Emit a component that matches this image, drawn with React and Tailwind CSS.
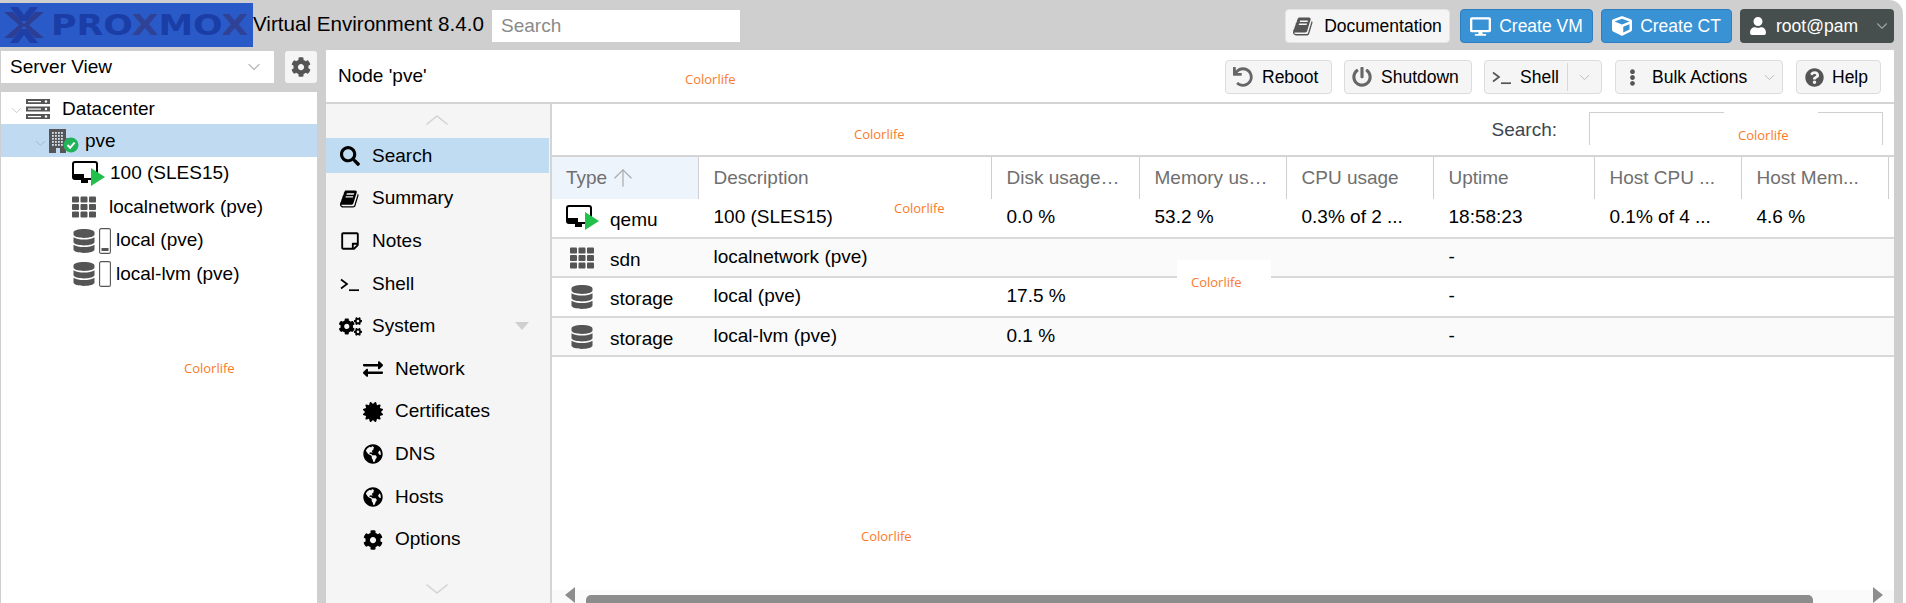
import React from 'react';
import { ChevronDown, ChevronUp, ArrowUp } from 'lucide-react';
import {
  FaDesktop, FaCube, FaUser, FaSearch, FaCog, FaCogs, FaExchangeAlt,
  FaCertificate, FaGlobeAmericas, FaDatabase, FaTh, FaUndo, FaPowerOff,
  FaEllipsisV, FaQuestionCircle, FaRegStickyNote,
} from 'react-icons/fa';

const Book = ({ className }) => (
  <svg viewBox="0 0 1792 1792" className={className} fill="currentColor">
    <path d="M1639 478q40 57 18 129l-275 906q-19 64-76.5 107.5t-122.5 43.5h-923q-77 0-148.5-53.5t-99.5-131.5q-24-67-2-127 0-4 3-27t4-37q1-8-3-21.5t-3-19.5q2-11 8-21t16.5-23.5 16.5-23.5q23-38 45-91.5t30-91.5q3-10 .5-30t-.5-28q3-11 17-28t17-23q21-36 42-92t25-90q1-9-2.5-32t.5-28q4-13 22-30.5t22-22.5q19-26 42.5-84.5t27.5-96.5q1-8-3-25.5t-2-26.5q2-8 9-18t18-23 17-21q8-12 16.5-30.5t15-35 16-36 19.5-32 26.5-23.5 36-11.5 47.5 5.5l-1 3q38-9 51-9h761q74 0 114 56t18 130l-274 906q-36 119-71.5 153.5t-128.5 34.5h-869q-27 0-38 15-11 16-1 43 24 70 144 70h923q29 0 56-15.5t35-41.5l300-987q7-22 5-57 38 15 59 43zm-1064 2q-4 13 2 22.5t20 9.5h608q13 0 25.5-9.5t16.5-22.5l21-64q4-13-2-22.5t-20-9.5h-608q-13 0-25.5 9.5t-16.5 22.5zm-83 256q-4 13 2 22.5t20 9.5h608q13 0 25.5-9.5t16.5-22.5l21-64q4-13-2-22.5t-20-9.5h-608q-13 0-25.5 9.5t-16.5 22.5z" />
  </svg>
);

const Shell = ({ className }) => (
  <svg viewBox="0 0 20 16" className={className} fill="none" stroke="currentColor" strokeWidth="1.7">
    <path d="M1 3.5 7 8l-6 4.5" />
    <path d="M9 14.2h10" />
  </svg>
);

const VmIcon = () => (
  <svg width="34" height="26" viewBox="0 0 34 26">
    <rect x="1" y="1" width="24" height="17" rx="2" fill="#fff" stroke="#000" strokeWidth="2" />
    <path d="M1 13h11v5H16v4H9v-4H3a2 2 0 0 1-2-2z" fill="#000" />
    <path d="M19 7v18l14-9z" fill="#21bf4b" />
  </svg>
);

const Datacenter = () => (
  <svg width="24" height="20" viewBox="0 0 24 20">
    <rect y="0" width="24" height="5" fill="#555" />
    <rect y="7.5" width="24" height="5" fill="#555" />
    <rect y="15" width="24" height="5" fill="#555" />
    <rect x="2" y="2" width="13" height="1.2" fill="#fff" />
    <rect x="2" y="9.5" width="13" height="1.2" fill="#fff" />
    <rect x="2" y="17" width="13" height="1.2" fill="#fff" />
    <circle cx="20" cy="2.5" r="1.2" fill="#fff" />
    <circle cx="20" cy="10" r="1.2" fill="#fff" />
    <circle cx="20" cy="17.5" r="1.2" fill="#fff" />
  </svg>
);

const NodeIcon = () => (
  <svg width="30" height="26" viewBox="0 0 30 26">
    <rect x="0" y="0" width="17" height="24" fill="#555" />
    <path d="M17 9h3v6h-3z" fill="#777" />
    {[3, 6, 9, 12].map((x) =>
      [3, 6, 9, 12, 15].map((y) => <rect key={`${x}-${y}`} x={x} y={y} width="1.8" height="1.8" fill="#d5e3ef" />)
    )}
    <rect x="7" y="19" width="4" height="5" fill="#c0dbf1" />
    <circle cx="22" cy="16" r="7.5" fill="#21b35a" />
    <path d="M18.5 16l2.6 2.7 4.5-5" fill="none" stroke="#fff" strokeWidth="2" />
  </svg>
);

const Device = ({ filled }) => (
  <svg width="12" height="26" viewBox="0 0 12 26">
    <rect x=".6" y=".6" width="10.8" height="24.8" rx="1.5" fill="#fff" stroke="#555" strokeWidth="1.1" />
    {filled && <rect x="2.5" y="20" width="7" height="3" fill="#555" />}
  </svg>
);

const Mark = ({ className }) => (
  <span className={`absolute font-['Open_Sans',sans-serif] text-[13px] leading-[18px] text-[#f97a2a] ${className}`}>
    Colorlife
  </span>
);

const Logo = () => (
  <div className="mt-[3px] flex h-[44px] w-[253px] shrink-0 items-center overflow-hidden bg-[#2a5ac8] pl-[3px]">
    <svg width="42" height="38" viewBox="0 0 42 38" className="shrink-0">
      <path d="M1 6h9l11 12 11-12h9L26 19l15 13h-9L21 20 10 32H1l15-13z" fill="#2d3f94" />
      <path d="M7 1h8l6 8 6-8h8L24 15h-6zM7 37h8l6-8 6 8h8L24 23h-6z" fill="#1f3fa6" />
    </svg>
    <span className="ml-[6px] origin-left scale-x-[1.2] font-['DejaVu_Sans',sans-serif] text-[29px] font-bold leading-none text-[#1a3da6]">
      PRO<span className="text-[#2f4296]">X</span>MO<span className="text-[#2f4296]">X</span>
    </span>
  </div>
);

const TopButton = ({ icon: Icon, label, className, iconClass }) => (
  <button className={`flex h-[34px] items-center justify-center gap-[8px] rounded-[4px] border text-[17.5px] ${className}`}>
    <Icon className={iconClass} />
    {label}
  </button>
);

const ToolButton = ({ icon: Icon, label, className, children, iconClass = 'text-[#666] text-[19px]' }) => (
  <button className={`flex h-[34px] items-center gap-[8px] rounded-[4px] border border-[#dcdcdc] bg-[#f5f5f5] pl-[7px] text-[17.5px] text-black ${className}`}>
    <Icon className={iconClass} />
    {label}
    {children}
  </button>
);

const menu = [
  { icon: FaSearch, label: 'Search', active: true },
  { icon: Book, label: 'Summary' },
  { icon: FaRegStickyNote, label: 'Notes' },
  { icon: Shell, label: 'Shell' },
  { icon: FaCogs, label: 'System', caret: true },
  { icon: FaExchangeAlt, label: 'Network', sub: true },
  { icon: FaCertificate, label: 'Certificates', sub: true },
  { icon: FaGlobeAmericas, label: 'DNS', sub: true },
  { icon: FaGlobeAmericas, label: 'Hosts', sub: true },
  { icon: FaCog, label: 'Options', sub: true },
];

const columns = ['Description', 'Disk usage…', 'Memory us…', 'CPU usage', 'Uptime', 'Host CPU ...', 'Host Mem...'];

const rows = [
  { icon: <VmIcon />, type: 'qemu', cells: ['100 (SLES15)', '0.0 %', '53.2 %', '0.3% of 2 ...', '18:58:23', '0.1% of 4 ...', '4.6 %'], h: 'h-[40px] bg-white' },
  { icon: <FaTh className="ml-[4px] text-[24px] text-[#555]" />, type: 'sdn', cells: ['localnetwork (pve)', '', '', '', '-', '', ''], h: 'h-[39px] bg-[#fafafa]' },
  { icon: <FaDatabase className="ml-[4px] text-[24px] text-[#555]" />, type: 'storage', cells: ['local (pve)', '17.5 %', '', '', '-', '', ''], h: 'h-[40px] bg-white' },
  { icon: <FaDatabase className="ml-[4px] text-[24px] text-[#555]" />, type: 'storage', cells: ['local-lvm (pve)', '0.1 %', '', '', '-', '', ''], h: 'h-[39px] bg-[#fafafa]' },
];

const gridCols = 'grid-cols-[147px_293px_148px_147px_147px_161px_147px_147px_5px]';

export default function App() {
  return (
    <div className="relative h-[603px] w-[1906px] overflow-hidden bg-white font-['Liberation_Sans',Arial,sans-serif] text-[19px] text-black">
      <div className="flex h-full w-[1903px] flex-col rounded-tr-[14px] bg-[#cfcfcf]">
        {/* top bar */}
        <header className="flex h-[50px] shrink-0 items-start">
          <Logo />
          <span className="mt-[10px] w-[239px] shrink-0 text-[20.6px] leading-[28px]">Virtual Environment 8.4.0</span>
          <input
            placeholder="Search"
            className="mt-[10px] h-[32px] w-[248px] bg-white px-[9px] text-[19px] outline-none placeholder:text-[#8a8a8a]"
          />
          <div className="ml-auto mr-[9px] mt-[9px] flex gap-[8px]">
            <TopButton icon={Book} label="Documentation" className="w-[165px] gap-[10px] border-[#e4e4e4] bg-[#f5f5f5]" iconClass="h-[21px] w-[21px] text-[#555]" />
            <TopButton icon={FaDesktop} label="Create VM" className="ml-[2px] w-[133px] border-[#2f7fc0] bg-[#3892d4] text-white" iconClass="text-[21px]" />
            <TopButton icon={FaCube} label="Create CT" className="w-[131px] border-[#2f7fc0] bg-[#3892d4] text-white" iconClass="text-[20px]" />
            <button className="flex h-[34px] w-[154px] items-center gap-[9px] rounded-[4px] bg-[#474f4e] pl-[9px] text-[17.5px] text-white">
              <FaUser className="text-[18px]" />
              root@pam
              <ChevronDown size={18} strokeWidth={1.5} className="ml-[6px] text-[#9aa3a2]" />
            </button>
          </div>
        </header>

        <div className="flex min-h-0 flex-1 gap-[9px]">
          {/* left tree */}
          <aside className="flex w-[317px] shrink-0 flex-col pl-[1px]">
            <div className="flex h-[33px] items-center justify-between pt-[1px]">
              <div className="flex h-[32px] w-[273px] items-center justify-between bg-white pl-[9px] pr-[10px]">
                Server View
                <ChevronDown size={20} strokeWidth={1.5} className="text-[#bbb]" />
              </div>
              <button className="flex h-[32px] w-[32px] items-center justify-center rounded-[3px] bg-[#f5f5f5]">
                <FaCog className="text-[20px] text-[#555]" />
              </button>
            </div>
            <div className="mt-[9px] min-h-0 flex-1 bg-white">
              <div className="flex h-[32px] items-center pl-[7px] pt-[2px]">
                <ChevronDown size={17} strokeWidth={1.2} className="mr-[1px] mt-[3px] text-[#c4c4c4]" />
                <Datacenter />
                <span className="ml-[12px]">Datacenter</span>
              </div>
              <div className="flex h-[33px] items-center bg-[#c0dbf1] pl-[31px] pt-[2px]">
                <ChevronDown size={17} strokeWidth={1.2} className="mt-[3px] text-[#9fb2c2]" />
                <NodeIcon />
                <span className="ml-[6px]">pve</span>
              </div>
              <div className="flex h-[33px] items-center pl-[71px]">
                <VmIcon />
                <span className="ml-[4px]">100 (SLES15)</span>
              </div>
              <div className="flex h-[34px] items-center pl-[71px]">
                <FaTh className="text-[24px] text-[#555]" />
                <span className="ml-[13px]">localnetwork (pve)</span>
              </div>
              <div className="flex h-[33px] items-center pl-[71px]">
                <FaDatabase className="text-[24px] text-[#555]" />
                <span className="ml-[3px]"><Device filled /></span>
                <span className="ml-[5px]">local (pve)</span>
              </div>
              <div className="flex h-[34px] items-center pl-[71px]">
                <FaDatabase className="text-[24px] text-[#555]" />
                <span className="ml-[3px]"><Device /></span>
                <span className="ml-[5px]">local-lvm (pve)</span>
              </div>
            </div>
          </aside>

          {/* content panel */}
          <main className="mr-[9px] flex min-w-0 flex-1 flex-col bg-white">
            <div className="flex h-[54px] shrink-0 items-start justify-between border-b-2 border-[#d4d4d4] pr-[13px]">
              <span className="ml-[12px] mt-[13px] leading-[26px]">Node 'pve'</span>
              <div className="mt-[10px] flex gap-[12px]">
                <ToolButton icon={FaUndo} label="Reboot" className="w-[107px] gap-[9px]" iconClass="text-[#666] text-[20px]" />
                <ToolButton icon={FaPowerOff} label="Shutdown" className="w-[128px] gap-[9px]" iconClass="text-[#666] text-[20px]" />
                <ToolButton icon={Shell} label="Shell" className="w-[118px]" iconClass="h-[16px] w-[20px] text-[#555]">
                  <span className="h-[28px] border-l border-[#d8d8d8]" />
                  <ChevronDown size={17} strokeWidth={1.4} className="text-[#bbb]" />
                </ToolButton>
                <ToolButton icon={FaEllipsisV} label="Bulk Actions" className="ml-[1px] w-[168px]" iconClass="ml-[1px] mr-[3px] text-[17px] text-[#555]">
                  <ChevronDown size={17} strokeWidth={1.4} className="ml-[6px] text-[#bbb]" />
                </ToolButton>
                <ToolButton icon={FaQuestionCircle} label="Help" className="ml-[1px] w-[85px]" iconClass="ml-[1px] text-[19px] text-[#555]" />
              </div>
            </div>

            <div className="flex min-h-0 flex-1">
              {/* side menu */}
              <nav className="flex w-[226px] shrink-0 flex-col border-r-2 border-[#d4d4d4] bg-[#f5f5f5] pr-[1px]">
                <div className="flex h-[34.4px] shrink-0 items-center justify-center pb-[2px] pr-[2px]">
                  <ChevronUp size={32} strokeWidth={1} className="scale-x-125 text-[#d4d4d4]" />
                </div>
                <div className="flex flex-col gap-[7.65px]">
                  {menu.map((m) => (
                    <div
                      key={m.label}
                      className={`flex h-[35px] shrink-0 items-center ${m.sub ? 'pl-[37px]' : 'pl-[14px]'} ${m.active ? 'bg-[#c0dcf2]' : ''}`}
                    >
                      <span className="flex w-[32px] shrink-0 items-center">
                        {m.icon === Shell && <Shell className="h-[16px] w-[20px]" />}
                        {m.icon === Book && <Book className="h-[20px] w-[20px]" />}
                        {m.icon === FaCogs && <FaCogs className="-ml-[1px] text-[23px]" />}
                        {m.icon !== Shell && m.icon !== Book && m.icon !== FaCogs && <m.icon className="text-[20px]" />}
                      </span>
                      {m.label}
                      {m.caret && <span className="ml-auto mr-[20px] h-0 w-0 border-x-[7px] border-t-[8px] border-x-transparent border-t-[#cfcfcf]" />}
                    </div>
                  ))}
                </div>
                <div className="flex flex-1 items-end justify-center pb-[2px] pr-[2px]">
                  <ChevronDown size={32} strokeWidth={1} className="-mb-[4px] scale-x-125 text-[#d4d4d4]" />
                </div>
              </nav>

              {/* grid */}
              <section className="flex min-w-0 flex-1 flex-col">
                <div className="flex h-[51px] shrink-0 items-start justify-end pr-[11px] pt-[8px]">
                  <span className="mr-[32px] mt-[4px] text-[#3c4650]">Search:</span>
                  <div className="h-[33px] w-[294px] border-x border-t border-[#cfcfcf]" />
                </div>
                <div className={`grid h-[44px] shrink-0 border-t-2 border-[#d4d4d4] text-[#6f6f6f] ${gridCols}`}>
                  <div className="flex items-center gap-[2px] border-r border-[#cfcfcf] bg-[#eef4fb] pl-[14px]">
                    Type <ArrowUp size={28} strokeWidth={1} className="text-[#a8a8a8]" />
                  </div>
                  {columns.map((c) => (
                    <div key={c} className="flex items-center border-r border-[#cfcfcf] pl-[14.5px]">{c}</div>
                  ))}
                </div>
                {rows.map((r, i) => (
                  <div key={i} className={`grid shrink-0 border-b-2 border-[#d9d9d9] ${r.h} ${gridCols}`}>
                    <div className="flex items-center pl-[14px]">
                      <span className="flex w-[44px] shrink-0 items-center">{r.icon}</span>
                      <span className="pt-[5px]">{r.type}</span>
                    </div>
                    {r.cells.map((c, j) => (
                      <div key={j} className="flex items-center pb-[1px] pl-[14.5px]">{c}</div>
                    ))}
                  </div>
                ))}
                <div className="flex-1" />
                <div className="flex h-[13px] shrink-0 items-end bg-[#fafafa] pl-[13px] pr-[11px]">
                  <span className="h-0 w-0 border-y-[8px] border-r-[10px] border-y-transparent border-r-[#8c8c8c]" />
                  <span className="ml-[11px] h-[8px] w-[1227px] rounded-t-[5px] bg-[#8c8c8c]" />
                  <span className="ml-auto h-0 w-0 border-y-[8px] border-l-[10px] border-y-transparent border-l-[#8c8c8c]" />
                </div>
              </section>
            </div>
          </main>
        </div>
      </div>

      {/* watermark patches over the page */}
      <span className="absolute left-[1724px] top-[112px] h-[16px] w-[94px] bg-white" />
      <span className="absolute left-[1177px] top-[260px] h-[50px] w-[94px] bg-white" />
      <Mark className="left-[184px] top-[359px]" />
      <Mark className="left-[685px] top-[70px]" />
      <Mark className="left-[854px] top-[125px]" />
      <Mark className="left-[1738px] top-[126px]" />
      <Mark className="left-[894px] top-[199px]" />
      <Mark className="left-[1191px] top-[273px]" />
      <Mark className="left-[861px] top-[527px]" />
    </div>
  );
}
